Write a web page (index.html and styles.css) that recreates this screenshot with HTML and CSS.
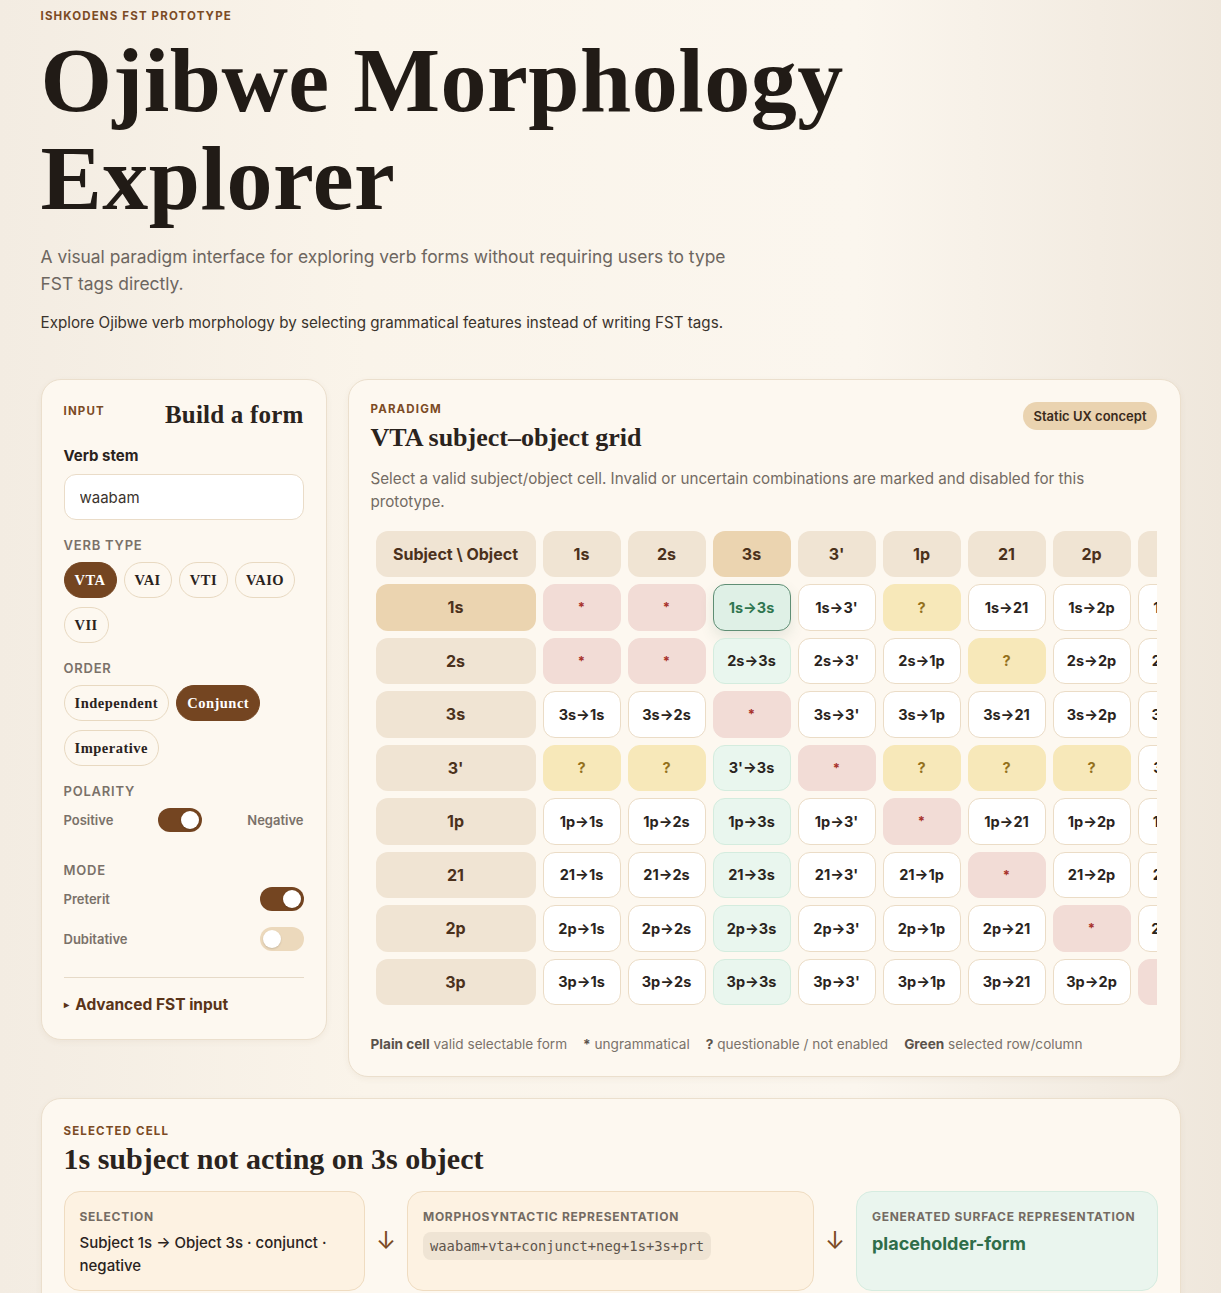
FILE: index.html
```html
<!DOCTYPE html>
<html lang="en">
<head>
    <meta charset="UTF-8">
    <meta name="viewport" content="width=device-width, initial-scale=1.0">
    <title>Ojibwe Morphology Explorer</title>
    <link rel="stylesheet" href="styles.css">
</head>
<body>
<div class="page">
    <header class="hero">
        <div class="eyebrow">Ishkodens FST prototype</div>
        <h1>Ojibwe Morphology Explorer</h1>
        <p class="lede">A visual paradigm interface for exploring verb forms without requiring users to type FST tags directly.</p>
        <p class="sub">Explore Ojibwe verb morphology by selecting grammatical features instead of writing FST tags.</p>
    </header>

    <div class="workspace">
        <!-- left: feature picker -->
        <section class="panel builder">
            <div class="panel-head">
                <div class="eyebrow">Input</div>
                <h2 class="builder-title">Build a form</h2>
            </div>

            <label class="field-label" for="stem">Verb stem</label>
            <input id="stem" class="stem-input" type="text" value="waabam">

            <div class="group-label">Verb type</div>
            <div class="chips">
                <button class="chip active">VTA</button>
                <button class="chip">VAI</button>
                <button class="chip">VTI</button>
                <button class="chip">VAIO</button>
                <button class="chip">VII</button>
            </div>

            <div class="group-label">Order</div>
            <div class="chips">
                <button class="chip">Independent</button>
                <button class="chip active">Conjunct</button>
                <button class="chip">Imperative</button>
            </div>

            <div class="group-label">Polarity</div>
            <div class="polarity">
                <span class="opt">Positive</span>
                <span class="toggle on"></span>
                <span class="opt">Negative</span>
            </div>

            <div class="group-label mode-label">Mode</div>
            <div class="switch-row">
                <span class="opt">Preterit</span>
                <span class="toggle on"></span>
            </div>
            <div class="switch-row">
                <span class="opt">Dubitative</span>
                <span class="toggle"></span>
            </div>

            <div class="advanced"><span class="caret">&#9656;</span> Advanced FST input</div>
        </section>

        <!-- right: subject/object paradigm -->
        <section class="panel paradigm">
            <div class="paradigm-head">
                <div>
                    <div class="eyebrow">Paradigm</div>
                    <h2 class="grid-title">VTA subject&ndash;object grid</h2>
                </div>
                <span class="badge">Static UX concept</span>
            </div>
            <p class="hint">Select a valid subject/object cell. Invalid or uncertain combinations are marked and disabled for this prototype.</p>

            <div class="grid-wrap">
                <table class="grid">
                    <colgroup>
                        <col class="c-first">
                        <col><col><col><col><col><col><col><col>
                    </colgroup>
                    <tr>
                        <th class="head">Subject \ Object</th>
                        <th class="head">1s</th><th class="head">2s</th><th class="head sel">3s</th><th class="head">3'</th>
                        <th class="head">1p</th><th class="head">21</th><th class="head">2p</th><th class="head">3p</th>
                    </tr>
                    <tr>
                        <th class="row-head sel">1s</th>
                        <td class="bad">*</td><td class="bad">*</td><td class="picked">1s&rarr;3s</td><td>1s&rarr;3'</td>
                        <td class="maybe">?</td><td>1s&rarr;21</td><td>1s&rarr;2p</td><td>1s&rarr;3p</td>
                    </tr>
                    <tr>
                        <th class="row-head">2s</th>
                        <td class="bad">*</td><td class="bad">*</td><td class="col">2s&rarr;3s</td><td>2s&rarr;3'</td>
                        <td>2s&rarr;1p</td><td class="maybe">?</td><td>2s&rarr;2p</td><td>2s&rarr;3p</td>
                    </tr>
                    <tr>
                        <th class="row-head">3s</th>
                        <td>3s&rarr;1s</td><td>3s&rarr;2s</td><td class="bad">*</td><td>3s&rarr;3'</td>
                        <td>3s&rarr;1p</td><td>3s&rarr;21</td><td>3s&rarr;2p</td><td>3s&rarr;3p</td>
                    </tr>
                    <tr>
                        <th class="row-head">3'</th>
                        <td class="maybe">?</td><td class="maybe">?</td><td class="col">3'&rarr;3s</td><td class="bad">*</td>
                        <td class="maybe">?</td><td class="maybe">?</td><td class="maybe">?</td><td>3'&rarr;3p</td>
                    </tr>
                    <tr>
                        <th class="row-head">1p</th>
                        <td>1p&rarr;1s</td><td>1p&rarr;2s</td><td class="col">1p&rarr;3s</td><td>1p&rarr;3'</td>
                        <td class="bad">*</td><td>1p&rarr;21</td><td>1p&rarr;2p</td><td>1p&rarr;3p</td>
                    </tr>
                    <tr>
                        <th class="row-head">21</th>
                        <td>21&rarr;1s</td><td>21&rarr;2s</td><td class="col">21&rarr;3s</td><td>21&rarr;3'</td>
                        <td>21&rarr;1p</td><td class="bad">*</td><td>21&rarr;2p</td><td>21&rarr;3p</td>
                    </tr>
                    <tr>
                        <th class="row-head">2p</th>
                        <td>2p&rarr;1s</td><td>2p&rarr;2s</td><td class="col">2p&rarr;3s</td><td>2p&rarr;3'</td>
                        <td>2p&rarr;1p</td><td>2p&rarr;21</td><td class="bad">*</td><td>2p&rarr;3p</td>
                    </tr>
                    <tr>
                        <th class="row-head">3p</th>
                        <td>3p&rarr;1s</td><td>3p&rarr;2s</td><td class="col">3p&rarr;3s</td><td>3p&rarr;3'</td>
                        <td>3p&rarr;1p</td><td>3p&rarr;21</td><td>3p&rarr;2p</td><td class="bad">*</td>
                    </tr>
                </table>
            </div>

            <div class="legend">
                <span><b>Plain cell</b> valid selectable form</span>
                <span><b>*</b> ungrammatical</span>
                <span><b>?</b> questionable / not enabled</span>
                <span><b>Green</b> selected row/column</span>
            </div>
        </section>
    </div>

    <!-- bottom: what the selected cell turns into -->
    <section class="panel result">
        <div class="eyebrow">Selected cell</div>
        <h2 class="result-title">1s subject not acting on 3s object</h2>
        <div class="pipeline">
            <div class="step">
                <div class="step-label">Selection</div>
                <div class="step-text">Subject 1s &rarr; Object 3s &middot; conjunct &middot; negative</div>
            </div>
            <div class="arrow">&darr;</div>
            <div class="step">
                <div class="step-label">Morphosyntactic representation</div>
                <code class="fst">waabam+vta+conjunct+neg+1s+3s+prt</code>
            </div>
            <div class="arrow">&darr;</div>
            <div class="step surface">
                <div class="step-label">Generated surface representation</div>
                <div class="surface-form">placeholder-form</div>
            </div>
        </div>
    </section>
</div>
</body>
</html>
```

FILE: styles.css
```css
body {
    margin: 0;
    font-family: Inter, "Noto Sans", sans-serif;
    color: #2a231d;
    background: linear-gradient(90deg, #f3ece2 0%, #faf4ea 30%, #fbf6ee 70%, #efe7dc 100%);
    min-height: 100vh;
}
.page {
    max-width: 1140px;
    margin: 0 auto;
    padding: 9px 0 40px;
}
.eyebrow {
    font-size: 11.5px;
    font-weight: 700;
    letter-spacing: 0.1em;
    text-transform: uppercase;
    color: #7b4b25;
}
h1 {
    font-family: "Liberation Serif", serif;
    font-size: 92px;
    line-height: 98px;
    font-weight: 700;
    letter-spacing: 0.5px;
    margin: 8px 0 0;
    max-width: 880px;
    color: #211b16;
}
.lede {
    font-size: 17.4px;
    line-height: 27px;
    color: #6d665f;
    max-width: 700px;
    margin: 16px 0 0;
}
.sub {
    font-size: 15.2px;
    color: #3a332c;
    margin: 16px 0 0;
}
.workspace {
    display: grid;
    grid-template-columns: 286px minmax(0, 1fr);
    gap: 21px;
    align-items: start;
    margin-top: 47px;
}
.panel {
    background: #fdf8f0;
    border: 1px solid #ebdfcd;
    border-radius: 20px;
    box-shadow: 0 2px 6px rgba(120, 90, 50, 0.06);
}

/* builder */
.builder {
    padding: 24px 22px 25px;
}
.panel-head {
    display: flex;
    justify-content: space-between;
    align-items: flex-start;
}
.builder-title {
    font-family: "Liberation Serif", serif;
    font-size: 25px;
    font-weight: 700;
    letter-spacing: 0.2px;
    margin: -3px 0 0;
}
.field-label {
    display: block;
    font-size: 15px;
    font-weight: 700;
    margin-top: 17px;
}
.stem-input {
    display: block;
    box-sizing: border-box;
    width: 100%;
    height: 46px;
    margin-top: 9px;
    padding: 0 15px;
    border: 1px solid #eadcc8;
    border-radius: 12px;
    background: #fff;
    font-family: Inter, sans-serif;
    font-size: 15px;
    color: #3a332c;
}
.group-label {
    font-size: 13px;
    font-weight: 600;
    letter-spacing: 0.06em;
    text-transform: uppercase;
    color: #7a7169;
    margin-top: 17px;
}
.chips {
    display: flex;
    flex-wrap: wrap;
    gap: 9px 7px;
    margin-top: 9px;
}
.chip {
    height: 36px;
    padding: 0 10px;
    border: 1px solid #e8d9c1;
    border-radius: 18px;
    background: #fdf8f0;
    font-family: "Liberation Serif", serif;
    font-size: 14.5px;
    font-weight: 700;
    letter-spacing: 0.5px;
    color: #2a231d;
}
.chip.active {
    background: #744521;
    border-color: #744521;
    color: #fff;
}
.opt {
    font-size: 13px;
    font-weight: 600;
    color: #7a7169;
}
.polarity {
    display: flex;
    justify-content: space-between;
    align-items: center;
    margin-top: 9px;
}
.mode-label {
    margin-top: 30px;
}
.switch-row {
    display: flex;
    justify-content: space-between;
    align-items: center;
    margin-top: 9px;
}
.switch-row + .switch-row {
    margin-top: 16px;
}
.toggle {
    position: relative;
    width: 44px;
    height: 24px;
    border-radius: 12px;
    background: #ecd9bc;
}
.toggle::after {
    content: "";
    position: absolute;
    top: 3px;
    left: 3px;
    width: 18px;
    height: 18px;
    border-radius: 50%;
    background: #fff;
    box-shadow: 0 1px 2px rgba(0, 0, 0, 0.15);
}
.toggle.on {
    background: #744521;
}
.toggle.on::after {
    left: 23px;
}
.advanced {
    margin-top: 26px;
    padding-top: 17px;
    border-top: 1px solid #e6dac8;
    font-size: 15.5px;
    font-weight: 700;
    color: #5a3419;
}
.caret {
    font-size: 10px;
    margin-right: 3px;
    vertical-align: 2px;
}

/* paradigm grid */
.paradigm {
    padding: 22px 23px 24px 22px;
    min-width: 0;
}
.paradigm-head {
    display: flex;
    justify-content: space-between;
    align-items: flex-start;
}
.grid-title {
    font-family: "Liberation Serif", serif;
    font-size: 26px;
    font-weight: 700;
    margin: 7px 0 0;
}
.badge {
    background: #ead3b0;
    border-radius: 14px;
    padding: 6px 10px;
    font-size: 13px;
    font-weight: 600;
    color: #3a2a1c;
}
.hint {
    font-size: 15.2px;
    line-height: 23px;
    color: #736b63;
    max-width: 730px;
    margin: 14px 0 0;
}
.grid-wrap {
    overflow: hidden;
    margin-top: 18px;
    margin-left: -2px;
}
.grid {
    table-layout: fixed;
    width: 847px;
    border-collapse: separate;
    border-spacing: 7px 7.5px;
    margin: -7.5px 0;
}
.grid col {
    width: 78px;
}
.grid col.c-first {
    width: 160px;
}
.grid th,
.grid td {
    height: 46.5px;
    padding: 0;
    box-sizing: border-box;
    border-radius: 12px;
    text-align: center;
    white-space: nowrap;
    overflow: hidden;
}
.grid th {
    background: #f0e4d3;
    font-size: 16px;
    font-weight: 700;
    color: #4b311c;
}
.grid th.sel {
    background: #ebd4b0;
}
.grid td {
    background: #fff;
    border: 1px solid #ebdcc6;
    font-size: 14.5px;
    font-weight: 700;
    color: #2a2420;
}
.grid td.bad {
    background: #f2dcd6;
    border-color: #f2dcd6;
    color: #a8312a;
    font-size: 13px;
}
.grid td.maybe {
    background: #f7e8b9;
    border-color: #f7e8b9;
    color: #94701c;
}
.grid td.col {
    background: #e9f6ee;
    border-color: #d4ecde;
}
.grid td.picked {
    background: #dff0e6;
    border-color: #5f8e74;
    color: #2f7650;
    box-shadow: 0 6px 14px rgba(60, 110, 80, 0.12);
}
.legend {
    display: flex;
    gap: 16px;
    margin-top: 31px;
    font-size: 13.6px;
    color: #7a726a;
}
.legend b {
    color: #5a524a;
    font-weight: 700;
}

/* selected cell summary */
.result {
    margin-top: 21px;
    padding: 25px 22px 24px;
}
.result-title {
    font-family: "Liberation Serif", serif;
    font-size: 30px;
    font-weight: 700;
    margin: 4px 0 0;
}
.pipeline {
    display: grid;
    grid-template-columns: 1fr 20px 1.35fr 20px 1fr;
    gap: 11px;
    align-items: center;
    margin-top: 15px;
}
.step {
    align-self: stretch;
    box-sizing: border-box;
    padding: 17px 15px 13px;
    background: #fdf2e2;
    border: 1px solid #efdcc1;
    border-radius: 16px;
}
.step.surface {
    background: #eaf5ee;
    border-color: #d6ece0;
}
.step-label {
    font-size: 12px;
    font-weight: 700;
    letter-spacing: 0.06em;
    text-transform: uppercase;
    color: #746b63;
}
.step-text {
    font-size: 15px;
    font-weight: 500;
    line-height: 23px;
    margin-top: 7px;
    color: #2a231d;
}
.fst {
    display: inline-block;
    margin-top: 8px;
    padding: 6px 7px;
    background: #efe4d4;
    border-radius: 8px;
    font-family: "DejaVu Sans Mono", monospace;
    font-size: 13.8px;
    color: #5e554c;
}
.surface-form {
    font-size: 18px;
    font-weight: 700;
    color: #2f6d49;
    margin-top: 9px;
}
.arrow {
    text-align: center;
    font-size: 24px;
    color: #7b4b25;
}
```
